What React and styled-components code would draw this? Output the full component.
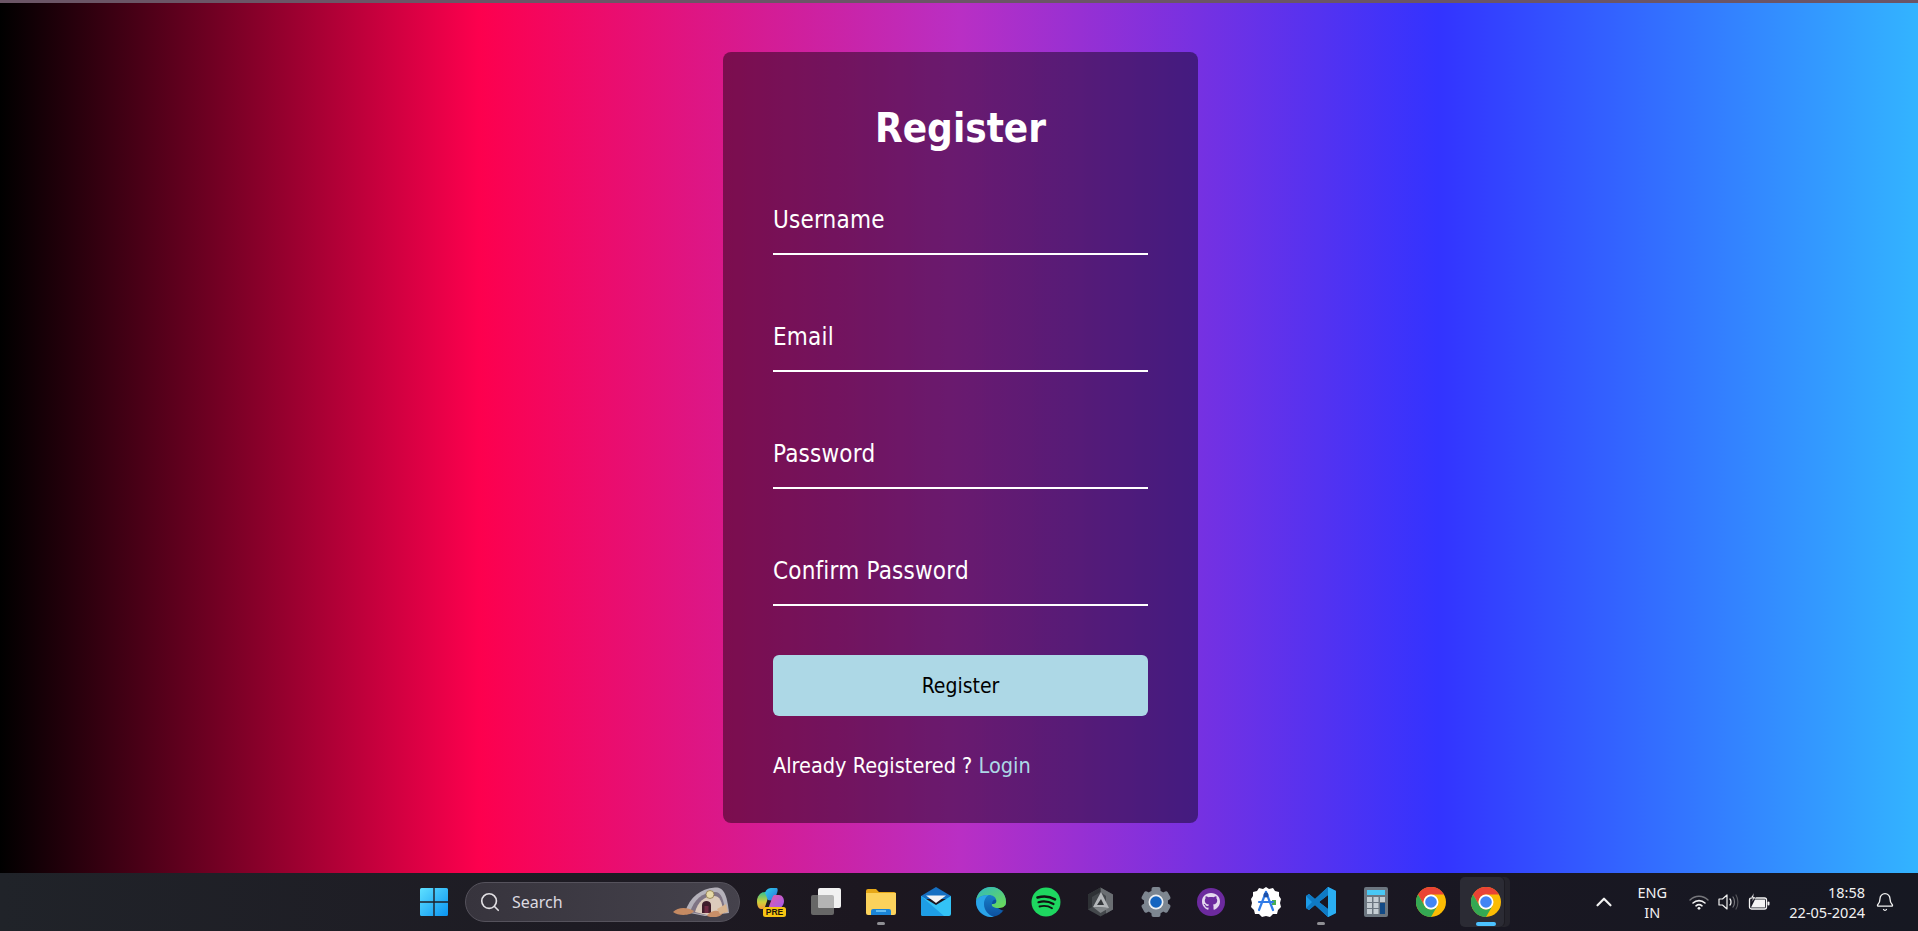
import React from "react";
import styled, { createGlobalStyle } from "styled-components";
import { Search, ChevronUp, Bell } from "lucide-react";

const GlobalStyle = createGlobalStyle`
  html, body {
    margin: 0;
    padding: 0;
    height: 100%;
    overflow: hidden;
  }
  #root {
    height: 100%;
  }
`;

const WindowsIcon = () => (
  <svg width="30" height="30" viewBox="0 0 30 30">
    <defs>
      <linearGradient id="win" x1="0" y1="0" x2="1" y2="1">
        <stop offset="0" stopColor="#5fe0ff" />
        <stop offset="1" stopColor="#0a94f0" />
      </linearGradient>
    </defs>
    <path d="M1 2.500A1.500 1.500 0 0 1 2.500 1H14.300V14.300H1Z M15.700 1H27.500A1.500 1.500 0 0 1 29 2.500V14.300H15.700Z M1 15.700H14.300V29H2.500A1.500 1.500 0 0 1 1 27.500Z M15.700 15.700H29V27.500A1.500 1.500 0 0 1 27.500 29H15.700Z" fill="url(#win)" />
  </svg>
);

const CaveArt = () => (
  <svg width="58" height="30" viewBox="0 0 58 30">
    <path d="M12 25C17 10 27 2 42 0.500C50 0 54 6 56 26L32 29Z" fill="#b4b1ba" />
    <path d="M17 25C21 13 29 5 42 5C48 5 51 12 52 26L32 28Z" fill="#7f7484" />
    <path d="M22 25C25 15 31 9 41 9C47 9 49 15 50 24L34 28Z" fill="#dccbbc" />
    <path d="M29 26V18C29 12.500 38 12.500 38 18V26Z" fill="#3f1d2b" />
    <path d="M31.500 26V19H35.500V26Z" fill="#6f2a42" />
    <circle cx="37" cy="7.500" r="4" fill="#e6d9a8" stroke="#8d7a4e" strokeWidth="0.800" />
    <path d="M0 25C5 20 14 20 21 24C18 29 5 29 0 25Z" fill="#c58a62" />
    <path d="M34 29C36 24 46 22 50 26C47 31 38 31 34 29Z" fill="#c98f68" />
    <path d="M44 22L53 17L55 25L47 27Z" fill="#d9b48f" />
  </svg>
);

const CopilotIcon = () => (
  <svg width="30" height="30" viewBox="0 0 30 30">
    <defs>
      <linearGradient id="cpa" x1="0" y1="0" x2="1" y2="1">
        <stop offset="0" stopColor="#2fd0e8" />
        <stop offset="1" stopColor="#2b6fe0" />
      </linearGradient>
      <linearGradient id="cpb" x1="0" y1="0" x2="0" y2="1">
        <stop offset="0" stopColor="#35c28e" />
        <stop offset="0.600" stopColor="#cfcf3a" />
        <stop offset="1" stopColor="#f49a3a" />
      </linearGradient>
      <linearGradient id="cpc" x1="0" y1="0" x2="1" y2="1">
        <stop offset="0" stopColor="#e85aa4" />
        <stop offset="1" stopColor="#9c5cf0" />
      </linearGradient>
    </defs>
    <path d="M1 14C1 9 5 5 9 5H14L9 20C8 22 6 22 5 22C2 22 1 18 1 14Z" fill="url(#cpb)" />
    <path d="M9 6C10 2 13 1 16 1H20C22 1 22 3 21 6L18 14L12 13Z" fill="url(#cpa)" />
    <path d="M18 8H23C26 8 28 11 28 14C28 18 25 22 21 22H12L15 14C16 11 17 9 18 8Z" fill="url(#cpc)" />
    <rect x="7" y="20" width="23" height="10" rx="2.500" fill="#f7c413" />
    <text x="18.500" y="28" textAnchor="middle" fontSize="8.500" fontWeight="700" fontFamily="Liberation Sans, sans-serif" fill="#1b1408">PRE</text>
  </svg>
);

const TaskViewIcon = () => (
  <svg width="32" height="30" viewBox="0 0 32 30">
    <rect x="1" y="8" width="23" height="20" rx="2" fill="#676767" />
    <rect x="8" y="1" width="23" height="20" rx="2" fill="#f1f1f1" />
    <path d="M8 8H22A2 2 0 0 1 24 10V21H10A2 2 0 0 1 8 19Z" fill="#b4b4b4" />
  </svg>
);

const FolderIcon = () => (
  <svg width="32" height="28" viewBox="0 0 32 28">
    <path d="M1 3A2 2 0 0 1 3 1H11L14 4H29A2 2 0 0 1 31 6V10H1Z" fill="#e6a818" />
    <path d="M1 5H31V25A2 2 0 0 1 29 27H3A2 2 0 0 1 1 25Z" fill="#fbd25c" />
    <path d="M6 27V23A2 2 0 0 1 8 21H24A2 2 0 0 1 26 23V27Z" fill="#1a84d6" />
    <rect x="11" y="22" width="10" height="2" fill="#64bdf2" />
  </svg>
);

const MailIcon = () => (
  <svg width="32" height="30" viewBox="0 0 32 30">
    <path d="M1 9L16 0L31 9V12H1Z" fill="#1670c2" />
    <path d="M1 9L16 18L31 9V27A2 2 0 0 1 29 29H3A2 2 0 0 1 1 27Z" fill="#33c3f6" />
    <path d="M1 9L24 29H3A2 2 0 0 1 1 27Z" fill="#1e9ee6" />
    <path d="M6 8.500H26L16 16Z" fill="#f4f4f4" />
  </svg>
);

const EdgeIcon = () => (
  <svg width="32" height="32" viewBox="0 0 32 32">
    <defs>
      <linearGradient id="edgeA" x1="0" y1="0" x2="1" y2="1">
        <stop offset="0" stopColor="#2fb8c0" />
        <stop offset="1" stopColor="#6fdc50" />
      </linearGradient>
      <linearGradient id="edgeB" x1="0" y1="0" x2="0" y2="1">
        <stop offset="0" stopColor="#1c8fd8" />
        <stop offset="1" stopColor="#0c4f9e" />
      </linearGradient>
    </defs>
    <circle cx="16" cy="16" r="15" fill="url(#edgeB)" />
    <path d="M32 19L23 22C26 24 28 25 29 24C30 23 31 21 32 19Z" fill="#1c1720" />
    <path d="M1 15C2 6 9 1 16 1C25 1 31 8 31 16C31 21 27 22 23 22C19 22 16 20 17 18C24 18 22 9 14 9C8 9 3 11 1 15Z" fill="url(#edgeA)" />
    <path d="M1 15C3 11 8 9 14 9C11 10 9 14 9 18C9 24 13 29 19 31C17 31 16 31 15 31C7 30 1 24 1 15Z" fill="#2aa4e8" />
    <path d="M17 18C17 15 19 13 21 14C22 17 20 18 17 18Z" fill="#0c4f9e" />
  </svg>
);

const SpotifyIcon = () => (
  <svg width="30" height="30" viewBox="0 0 30 30">
    <circle cx="15" cy="15" r="14.500" fill="#1ed760" />
    <path d="M6.500 10.500C12 9 19 9.500 24 12.300" stroke="#111" strokeWidth="2.600" strokeLinecap="round" fill="none" />
    <path d="M7.500 15.200C12 14 18 14.500 22.500 17" stroke="#111" strokeWidth="2.200" strokeLinecap="round" fill="none" />
    <path d="M8.500 19.500C12.500 18.600 17.500 19 21 21.200" stroke="#111" strokeWidth="1.800" strokeLinecap="round" fill="none" />
  </svg>
);

const HexIcon = () => (
  <svg width="27" height="30" viewBox="0 0 27 30">
    <path d="M13.500 0.500L26 7.500V22.500L13.500 29.500L1 22.500V7.500Z" fill="#44484c" />
    <path d="M13.500 0.500L26 7.500V22.500L19 26.500V9L13.500 5Z" fill="#6a6e72" />
    <path d="M1 7.500L13.500 0.500V5L5 10V20L1 22.500Z" fill="#2e3135" />
    <path d="M14 5L22 21L6 20Z" fill="#b4b7ba" />
    <path d="M14 12L17 18H10Z" fill="#33363a" />
    <path d="M6 20L22 21L13.500 26Z" fill="#7f8386" />
  </svg>
);

const SettingsIcon = () => (
  <svg width="32" height="32" viewBox="0 0 32 32">
    <g fill="#7d8690">
      <circle cx="16" cy="16" r="12" />
      {[0, 60, 120, 180, 240, 300].map((angle) => (
        <rect key={angle} x="11.500" y="1" width="9" height="8" rx="2" transform={`rotate(${angle} 16 16)`} />
      ))}
    </g>
    <circle cx="16" cy="16" r="7.500" fill="#eef1f4" />
    <circle cx="16" cy="16" r="5.800" fill="#1565c0" />
  </svg>
);

const GithubIcon = () => (
  <svg width="28" height="28" viewBox="0 0 28 28">
    <circle cx="14" cy="14" r="14" fill="#6c2a9e" />
    <path d="M14 5C8.500 5 5 8.600 5 13.500C5 17.400 7.400 20.500 10.800 21.700C11.300 21.800 11.500 21.500 11.500 21.200V19.600C9 20.100 8.400 18.600 8.200 18C8 17.600 7.600 16.900 7.200 16.700C6.900 16.500 6.500 16.100 7.200 16.100C7.900 16.100 8.400 16.700 8.600 17C9.400 18.400 10.700 18 11.500 17.700C11.600 17.100 11.900 16.700 12.100 16.400C10 16.200 7.800 15.300 7.800 12.400C7.800 11.500 8.100 10.800 8.600 10.300C8.500 10.100 8.300 9.300 8.700 8.200C8.700 8.200 9.500 8 11.500 9.200C12.300 9 13.200 8.900 14 8.900C14.800 8.900 15.700 9 16.500 9.200C18.500 8 19.300 8.200 19.300 8.200C19.700 9.300 19.500 10.100 19.400 10.300C19.900 10.800 20.200 11.500 20.200 12.400C20.200 15.300 18 16.200 15.900 16.400C16.200 16.700 16.500 17.200 16.500 18.100V21.200C16.500 21.500 16.700 21.800 17.200 21.700C20.600 20.500 23 17.400 23 13.500C23 8.600 19.500 5 14 5Z" fill="#e4d8ee" />
  </svg>
);

const StudioIcon = () => (
  <svg width="30" height="30" viewBox="0 0 30 30">
    <path d="M15 0L18 2L22 1L24 4L28 5L28 9L30 12L29 16L30 20L27 23L26 27L22 27L19 30L15 29L11 30L8 27L4 27L3 23L0 20L1 16L0 12L2 9L2 5L6 4L8 1L12 2Z" fill="#fff" />
    <path d="M21 13H25V18H21Z" fill="#4caf50" />
    <path d="M15 5L8 23" stroke="#2f7be8" strokeWidth="2.200" strokeLinecap="round" />
    <path d="M15 5L22 23" stroke="#2f7be8" strokeWidth="2.200" strokeLinecap="round" />
    <path d="M8 15H22" stroke="#2f7be8" strokeWidth="2.200" strokeLinecap="round" />
    <circle cx="15" cy="8" r="2.500" fill="#1b4fa8" />
  </svg>
);

const VscodeIcon = () => (
  <svg width="32" height="32" viewBox="0 0 32 32">
    <path d="M23 1L31 5V27L23 31L10 19L4 24L1 22V10L4 8L10 13ZM23 9L14 16L23 23Z" fill="#1c9ce8" />
    <path d="M23 1L31 5V27L23 31Z" fill="#2aaef2" />
    <path d="M23 9L14 16L23 23V31L10 19L4 24L1 22L7 16L1 10L4 8L10 13L23 1Z" fill="#0f7ac4" />
  </svg>
);

const CalcIcon = () => (
  <svg width="24" height="30" viewBox="0 0 24 30">
    <rect width="24" height="30" rx="2" fill="#6c7680" />
    <rect x="3" y="3" width="18" height="5" fill="#49c8f5" />
    <g fill="#c5cdd3">
      <rect x="3" y="10" width="5" height="5" />
      <rect x="9.500" y="10" width="5" height="5" />
      <rect x="16" y="10" width="5" height="5" />
      <rect x="3" y="16" width="5" height="5" />
      <rect x="9.500" y="16" width="5" height="5" />
      <rect x="3" y="22" width="5" height="5" />
      <rect x="9.500" y="22" width="5" height="5" />
    </g>
    <rect x="16" y="16" width="5" height="11" fill="#124a86" />
  </svg>
);

const ChromeIcon = () => (
  <svg width="30" height="30" viewBox="0 0 30 30">
    <circle cx="15" cy="15" r="15" fill="#fbbc04" />
    <path d="M2 7.500A15 15 0 0 1 28 7.500H15A7.500 7.500 0 0 0 8.500 18.750Z" fill="#ea4335" />
    <path d="M2 7.500L8.500 18.750A7.500 7.500 0 0 0 21.500 18.750L15 30A15 15 0 0 1 2 7.500Z" fill="#34a853" />
    <circle cx="15" cy="15" r="7.500" fill="#fff" />
    <circle cx="15" cy="15" r="5.800" fill="#4285f4" />
  </svg>
);

const WifiIcon = () => (
  <svg width="20" height="16" viewBox="0 0 20 16" fill="none" strokeLinecap="round">
    <path d="M1 6C6 1 14 1 19 6" stroke="#77777c" strokeWidth="1.400" />
    <path d="M4 9C7.500 5.800 12.500 5.800 16 9" stroke="#f2f2f2" strokeWidth="1.600" />
    <path d="M7 11.800C8.800 10.300 11.200 10.300 13 11.800" stroke="#f2f2f2" strokeWidth="1.600" />
    <circle cx="10" cy="14.300" r="1.400" fill="#f2f2f2" />
  </svg>
);

const SpeakerIcon = () => (
  <svg width="21" height="18" viewBox="0 0 21 18" fill="none">
    <path d="M1 6H4.500L9 2V16L4.500 12H1Z" stroke="#f2f2f2" strokeWidth="1.200" strokeLinejoin="round" />
    <path d="M12 6C13.300 7.500 13.300 10.500 12 12" stroke="#f2f2f2" strokeWidth="1.300" strokeLinecap="round" />
    <path d="M15 4C17 6.500 17 11.500 15 14" stroke="#77777c" strokeWidth="1.200" strokeLinecap="round" />
    <path d="M18 2C20.500 6 20.500 12 18 16" stroke="#55555a" strokeWidth="1.200" strokeLinecap="round" />
  </svg>
);

const BatteryIcon = () => (
  <svg width="22" height="18" viewBox="0 0 22 18" fill="none">
    <rect x="1.500" y="5" width="17" height="11" rx="2" stroke="#f5f5f5" strokeWidth="1.300" />
    <path d="M3 14.500L7 6.500H17V14.500Z" fill="#f5f5f5" />
    <rect x="19.500" y="8.500" width="2" height="4" rx="1" fill="#f5f5f5" />
    <path d="M6 0L2.500 5H5L3.500 9L8 4H5.500Z" fill="#f5f5f5" stroke="#1c1a26" strokeWidth="0.500" />
  </svg>
);

const pinnedApps = [
  { id: "copilot", icon: <CopilotIcon /> },
  { id: "taskview", icon: <TaskViewIcon /> },
  { id: "folder", icon: <FolderIcon />, running: true },
  { id: "mail", icon: <MailIcon /> },
  { id: "edge", icon: <EdgeIcon /> },
  { id: "spotify", icon: <SpotifyIcon /> },
  { id: "hex", icon: <HexIcon /> },
  { id: "settings", icon: <SettingsIcon /> },
  { id: "github", icon: <GithubIcon /> },
  { id: "studio", icon: <StudioIcon /> },
  { id: "vscode", icon: <VscodeIcon />, running: true },
  { id: "calc", icon: <CalcIcon /> },
  { id: "chrome", icon: <ChromeIcon /> },
  { id: "chrome-active", icon: <ChromeIcon />, active: true },
];

const fields = ["Username", "Email", "Password", "Confirm Password"];

const App = () => {
  return (
    <>
      <GlobalStyle />
      <Page>
        <TopStrip />
        <Main>
          <Card>
            <Title>Register</Title>
            <Form onSubmit={(e) => e.preventDefault()}>
              {fields.map((field) => (
                <Input key={field} placeholder={field} type="text" />
              ))}
              <Button type="submit">Register</Button>
              <Footer>
                Already Registered ? <LoginLink href="#">Login</LoginLink>
              </Footer>
            </Form>
          </Card>
        </Main>
        <Taskbar>
          <Apps>
            <AppSlot>
              <WindowsIcon />
            </AppSlot>
            <SearchBox>
              <Search size={22} color="#e2e0e4" strokeWidth={1.8} />
              <SearchLabel>Search</SearchLabel>
              <ArtSlot>
                <CaveArt />
              </ArtSlot>
            </SearchBox>
            {pinnedApps.map((app) => (
              <AppSlot key={app.id}>
                {app.active && <WindowStack />}
                {app.active && <ActiveTile />}
                <IconWrap>{app.icon}</IconWrap>
                {app.running && <RunningDot />}
                {app.active && <ActiveBar />}
              </AppSlot>
            ))}
          </Apps>
          <Tray>
            <ChevronUp size={26} color="#f2f2f2" strokeWidth={2} />
            <Lang>
              <span>ENG</span>
              <span>IN</span>
            </Lang>
            <TrayIcons>
              <WifiIcon />
              <SpeakerIcon />
              <BatteryIcon />
            </TrayIcons>
            <Clock>
              <span>18:58</span>
              <span>22-05-2024</span>
            </Clock>
            <Bell size={20} color="#f2f2f2" strokeWidth={1.6} />
          </Tray>
        </Taskbar>
      </Page>
    </>
  );
};

export default App;

// Styled Components
const Page = styled.div`
  height: 100vh;
  display: flex;
  flex-direction: column;
  overflow: hidden;
`;

const TopStrip = styled.div`
  height: 3px;
  flex: none;
  background: #6b5566;
`;

const Main = styled.main`
  flex: 1;
  min-height: 0;
  display: flex;
  justify-content: center;
  align-items: flex-start;
  padding: 49px 0 0 3px;
  background: linear-gradient(to right, #000000, #fd004e, #b92fc4, #3333ff, #33b4ff);
`;

const Card = styled.div`
  width: 475px;
  height: 771px;
  box-sizing: border-box;
  padding: 50px;
  border-radius: 8px;
  background: rgba(0, 0, 0, 0.43);
  font-family: "DejaVu Sans", sans-serif;
  font-stretch: condensed;
  color: #fff;
`;

const Title = styled.h1`
  margin: 0;
  text-align: center;
  font-size: 40px;
  line-height: 52px;
  font-weight: 700;
`;

const Form = styled.form`
  display: flex;
  flex-direction: column;
  margin-top: 54px;
`;

const Input = styled.input`
  height: 23px;
  padding: 0 0 22px;
  border: none;
  border-bottom: 2px solid #fff;
  background: transparent;
  color: #fff;
  font-family: inherit;
  font-stretch: condensed;
  font-size: 24px;
  letter-spacing: 0.2px;
  outline: none;
  &::placeholder {
    color: #fff;
    opacity: 1;
  }
  & + & {
    margin-top: 70px;
  }
`;

const Button = styled.button`
  height: 61px;
  margin-top: 49px;
  border: none;
  border-radius: 6px;
  background: lightblue;
  color: #000;
  font-family: inherit;
  font-stretch: condensed;
  font-size: 21px;
  cursor: pointer;
`;

const Footer = styled.p`
  margin: 35px 0 0;
  font-size: 21.500px;
  line-height: 29px;
  color: #fff;
`;

const LoginLink = styled.a`
  color: lightblue;
  text-decoration: none;
`;

const Taskbar = styled.footer`
  height: 58px;
  flex: none;
  display: flex;
  align-items: center;
  justify-content: space-between;
  padding: 0 23px 0 406px;
  background: linear-gradient(to right, #202329, #1c1720 45%, #1a1722 70%, #161822);
  font-family: "Noto Sans", sans-serif;
  color: #f2f2f2;
`;

const Apps = styled.div`
  display: flex;
  align-items: center;
`;

const AppSlot = styled.div`
  position: relative;
  width: 55px;
  height: 50px;
  display: flex;
  align-items: center;
  justify-content: center;
`;

const IconWrap = styled.span`
  position: relative;
  display: flex;
`;

const WindowStack = styled.span`
  position: absolute;
  top: 0;
  bottom: 0;
  left: 2px;
  width: 50px;
  border-radius: 5px;
  background: #25242c;
`;

const ActiveTile = styled.span`
  position: absolute;
  top: 0;
  bottom: 0;
  left: 2px;
  width: 44px;
  border-radius: 5px;
  background: #2b2b34;
  box-shadow: 1px 0 0 #1c1b22;
`;

const RunningDot = styled.span`
  position: absolute;
  bottom: 2px;
  left: 50%;
  width: 8px;
  height: 3px;
  margin-left: -4px;
  border-radius: 2px;
  background: #8f8f94;
`;

const ActiveBar = styled.span`
  position: absolute;
  bottom: 1px;
  left: 50%;
  width: 20px;
  height: 4px;
  margin-left: -10px;
  border-radius: 2px;
  background: #4cc2ff;
`;

const SearchBox = styled.div`
  position: relative;
  width: 275px;
  height: 40px;
  box-sizing: border-box;
  margin: 0 3px 0 4px;
  padding-left: 13px;
  display: flex;
  align-items: center;
  gap: 11px;
  border-radius: 20px;
  border: 1px solid #55525c;
  background: linear-gradient(to right, #37343d, #45424c);
`;

const SearchLabel = styled.span`
  font-size: 16px;
  color: #dcdae0;
`;

const ArtSlot = styled.span`
  position: absolute;
  right: 8px;
  bottom: 4px;
  display: flex;
`;

const Tray = styled.div`
  display: flex;
  align-items: center;
`;

const Lang = styled.div`
  width: 50px;
  margin-left: 10px;
  display: flex;
  flex-direction: column;
  align-items: center;
  font-size: 14.500px;
  line-height: 20px;
`;

const TrayIcons = styled.div`
  display: flex;
  align-items: center;
  gap: 9px;
  margin-left: 12px;
`;

const Clock = styled.div`
  margin: 0 10px 0 19px;
  display: flex;
  flex-direction: column;
  align-items: flex-end;
  font-size: 14.500px;
  line-height: 20px;
`;
